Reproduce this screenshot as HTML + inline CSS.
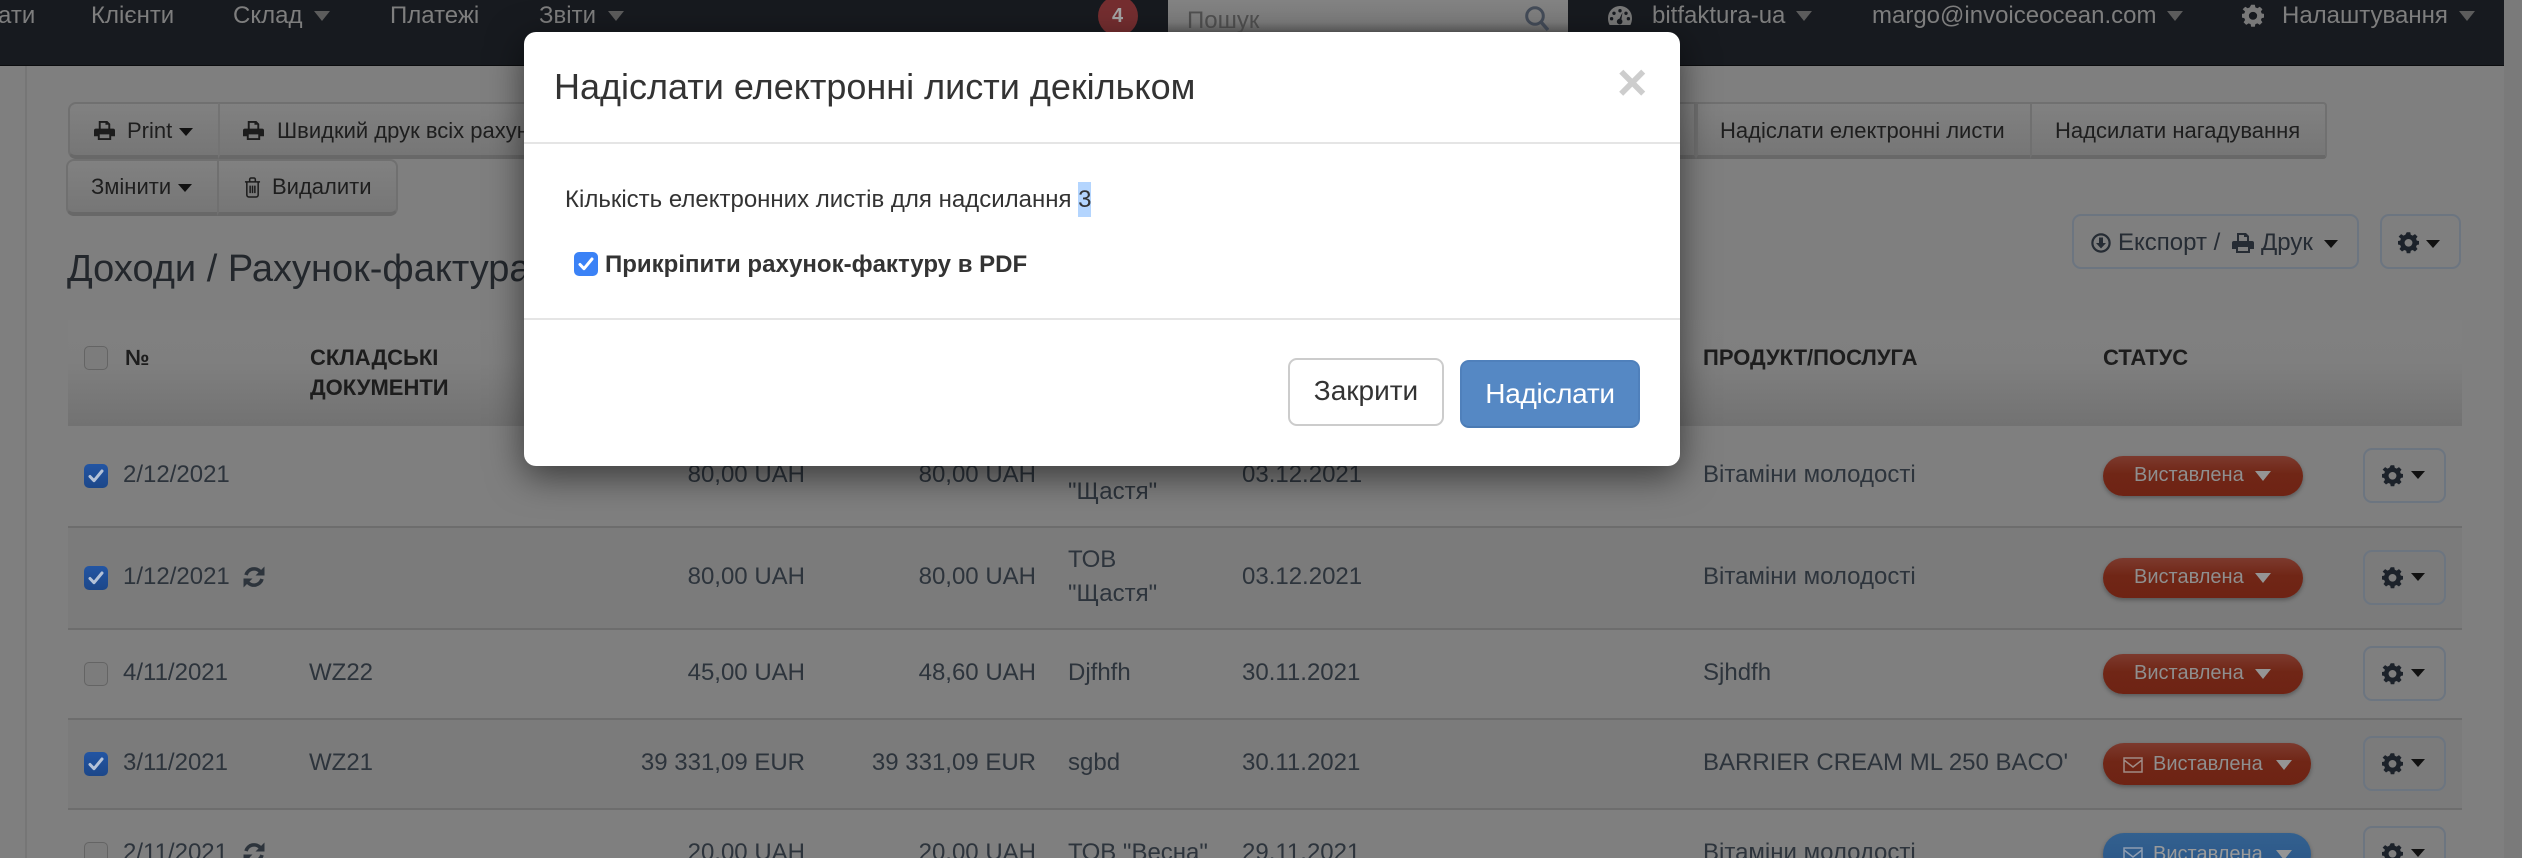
<!DOCTYPE html>
<html lang="uk"><head><meta charset="utf-8"><title>Доходи</title>
<style>
html,body{margin:0;padding:0;width:2522px;height:858px;overflow:hidden}
#p{position:absolute;left:0;top:0;width:2522px;height:858px;overflow:hidden;background:#7f7f7f;font-family:"Liberation Sans",sans-serif;font-size:24px;color:#2d343c}
.a,.t,.c,svg{position:absolute}
.t{white-space:nowrap;line-height:40px;height:40px}
.r{transform:translateX(-100%)}
.c{width:0;height:0;border-left:7px solid transparent;border-right:7px solid transparent;border-top:8px solid #111}
.nav .t{color:#7e7e7e;top:-4px}
.nav .c{border-left-width:8px;border-right-width:8px;border-top:10px solid #5c5c5c;top:11px}
.btn{background:linear-gradient(#818181,#767676);border:2px solid #707070;border-bottom:4px solid #686868;box-sizing:border-box;position:absolute}
.b{font-size:22px;color:#1e1e1e}
.h{font-weight:bold;font-size:22px;color:#1d1d1d}
.cb{position:absolute;left:84px;width:24px;height:24px;box-sizing:border-box;border-radius:5px;background:#7c7c7c;border:1.5px solid #646464}
.cb.k{background:linear-gradient(#2355a3,#1c4789);border:0}
.cb.k svg{left:4px;top:5px}
.pill{position:absolute;left:2103px;width:200px;height:40px;border-radius:20px;background:linear-gradient(#7c3a2e,#702616 45%,#6e2314);box-shadow:0 2px 4px rgba(0,0,0,.3)}
.pl{width:208px;height:42px;border-radius:21px}
.bl{background:linear-gradient(#33608f,#2a5686)}
.ps{font-size:20px;color:#8f8f8f}
.pc{border-left:8px solid transparent;border-right:8px solid transparent;border-top:10px solid #959595}
.g{position:absolute;left:2363px;width:83px;height:55px;box-sizing:border-box;border:2px solid #6c7580;border-radius:9px}
.line{position:absolute;left:68px;width:2394px;height:2px;background:#6d6d6d}
#m{position:absolute;left:524px;top:32px;width:1156px;height:434px;background:#fff;border-radius:12px;box-shadow:0 10px 36px rgba(0,0,0,.55);color:#333}
#m .t{color:#333}
</style></head><body>
<div id="p">
<svg width="0" height="0" style="position:absolute"><defs>
<symbol id="print" viewBox="0 0 22 22"><path fill="currentColor" d="M5 1h9l3 3v5h-2V5h-3V3H7v6H5zM2 9h18a2 2 0 0 1 2 2v6h-4v4H4v-4H0v-6a2 2 0 0 1 2-2zm4 6v4h10v-4z"/></symbol>
<symbol id="gear" viewBox="0 0 24 24"><path fill="currentColor" fill-rule="evenodd" d="M10 1h4l.6 3 2.2.9 2.6-1.7 2.9 2.9-1.7 2.6.9 2.2 3 .6v4l-3 .6-.9 2.2 1.7 2.6-2.9 2.9-2.6-1.7-2.2.9L14 26h-4l-.6-3-2.2-.9-2.6 1.7-2.9-2.9 1.7-2.6-.9-2.2-3-.6v-4l3-.6.9-2.2L.7 6.1l2.9-2.9 2.6 1.7 2.2-.9zM12 9a4.5 4.5 0 1 0 0 9 4.5 4.5 0 0 0 0-9z" transform="translate(0 -1.2) scale(1 .96)"/></symbol>
<symbol id="sync" viewBox="0 0 22 22"><path fill="none" stroke="currentColor" stroke-width="3.6" d="M3 9a8.3 8.3 0 0 1 14.5-3M19 13a8.3 8.3 0 0 1-14.5 3"/><path fill="currentColor" d="M21.500 .5v9h-9zM.5 21.500v-9h9z"/></symbol>
<symbol id="env" viewBox="0 0 20 16"><path fill="none" stroke="currentColor" stroke-width="1.5" d="M1 1h18v14H1zM1 3l9 7 9-7"/></symbol>
<symbol id="gauge" viewBox="0 0 24 20"><path fill="currentColor" fill-rule="evenodd" d="M12 0a12 12 0 0 1 12 12c0 3-.6 5-1.6 7H1.6C.6 17 0 15 0 12A12 12 0 0 1 12 0zM12 3a1.7 1.7 0 1 0 0 3.4A1.7 1.7 0 0 0 12 3zM6 5.6A1.7 1.7 0 1 0 6 9a1.7 1.7 0 0 0 0-3.4zM18 5.6A1.7 1.7 0 1 0 18 9a1.7 1.7 0 0 0 0-3.4zM3.600 11a1.700 1.700 0 1 0 0 3.400A1.700 1.700 0 0 0 3.600 11zM20.400 11a1.700 1.700 0 1 0 0 3.400 1.700 1.700 0 0 0 0-3.400zM14.500 6.500L11.400 12.800a2.800 2.800 0 1 0 2 .6z"/></symbol>
<symbol id="trash" viewBox="0 0 18 22"><path fill="none" stroke="currentColor" stroke-width="1.6" d="M1 5h16M3 5v14a2 2 0 0 0 2 2h8a2 2 0 0 0 2-2V5M6 5V2.500A1.500 1.500 0 0 1 7.500 1h3A1.500 1.500 0 0 1 12 2.500V5M6.500 9v8M9 9v8M11.500 9v8"/></symbol>
<symbol id="dl" viewBox="0 0 20 20"><circle cx="10" cy="10" r="8.600" fill="none" stroke="currentColor" stroke-width="2.200"/><path fill="currentColor" d="M8 4.500h4V10h3l-5 5.500L5 10h3z"/></symbol>
<symbol id="chk" viewBox="0 0 16 14"><path fill="none" stroke="currentColor" stroke-width="3" stroke-linecap="round" stroke-linejoin="round" d="M2 7.500l4 4.200 8-9.700"/></symbol>
<symbol id="mag" viewBox="0 0 24 26"><circle cx="10" cy="10" r="8.300" fill="none" stroke="currentColor" stroke-width="3"/><path stroke="currentColor" stroke-width="3.500" d="M16 16l7 8"/></symbol>
</defs></svg>

<!-- side strips -->
<div class="a" style="left:2504px;top:0;width:18px;height:858px;background:#7a7a7a"></div>
<div class="a" style="left:25px;top:65px;width:1.500px;height:793px;background:#767676"></div>

<!-- nav -->
<div class="a nav" style="left:0;top:0;width:2504px;height:66px;background:#171a1f;border-bottom:1px solid #0c0d0f;box-sizing:border-box">
<span class="t" style="left:-2px">ати</span>
<span class="t" style="left:91px">Клієнти</span>
<span class="t" style="left:233px">Склад</span><i class="c" style="left:314px"></i>
<span class="t" style="left:390px">Платежі</span>
<span class="t" style="left:539px">Звіти</span><i class="c" style="left:608px"></i>
<div class="a" style="left:1098px;top:-4px;width:40px;height:40px;border-radius:50%;background:#752e30"></div>
<span class="t" style="left:1112px;top:-4px;font-size:20px;font-weight:bold;color:#a5a5a5">4</span>
<div class="a" style="left:1168px;top:0;width:400px;height:32px;background:linear-gradient(#838383 0,#7d7d7d 70%,#6a6a6a 93%,#5e5e5e 100%)"></div>
<span class="t" style="left:1187px;top:1px;color:#505050">Пошук</span>
<svg style="left:1525px;top:6px;color:#444c59" width="24" height="26"><use href="#mag"/></svg>
<svg style="left:1608px;top:6px;color:#787878" width="24" height="20"><use href="#gauge"/></svg>
<span class="t" style="left:1652px">bitfaktura-ua</span><i class="c" style="left:1796px"></i>
<span class="t" style="left:1872px">margo@invoiceocean.com</span><i class="c" style="left:2167px"></i>
<svg style="left:2242px;top:4px;color:#787878" width="22" height="24"><use href="#gear"/></svg>
<span class="t" style="left:2282px">Налаштування</span><i class="c" style="left:2459px"></i>
</div>

<!-- toolbar row 1 -->
<div class="btn" style="left:68px;top:102px;width:152px;height:57px;border-radius:8px 0 0 8px"></div>
<div class="btn" style="left:218px;top:102px;width:1478px;height:57px;border-left:2px solid #737373"></div>
<div class="btn" style="left:1696px;top:102px;width:336px;height:57px;border-left:2px solid #707070"></div>
<div class="btn" style="left:2030px;top:102px;width:297px;height:57px;border-left:2px solid #707070;border-radius:0 4px 4px 0"></div>
<svg style="left:94px;top:120px;color:#1c1c1c" width="21" height="21"><use href="#print"/></svg>
<span class="t b" style="left:127px;top:111px">Print</span><i class="c" style="left:179px;top:128px"></i>
<svg style="left:243px;top:120px;color:#1c1c1c" width="21" height="21"><use href="#print"/></svg>
<span class="t b" style="left:277px;top:111px">Швидкий друк всіх рахунків</span>
<span class="t b" style="left:1720px;top:111px">Надіслати електронні листи</span>
<span class="t b" style="left:2055px;top:111px">Надсилати нагадування</span>
<!-- toolbar row 2 -->
<div class="btn" style="left:66px;top:159px;width:153px;height:57px;border-radius:8px 0 0 8px"></div>
<div class="btn" style="left:217px;top:159px;width:181px;height:57px;border-radius:0 8px 8px 0"></div>
<span class="t b" style="left:91px;top:167px">Змінити</span><i class="c" style="left:178px;top:184px"></i>
<svg style="left:244px;top:177px;color:#1c1c1c" width="17" height="21"><use href="#trash"/></svg>
<span class="t b" style="left:272px;top:167px">Видалити</span>

<span class="t" style="left:67px;top:249px;font-size:38px;color:#23272c">Доходи / Рахунок-фактура</span>

<!-- export -->
<div class="a" style="left:2072px;top:214px;width:287px;height:55px;box-sizing:border-box;border:2px solid #6c7580;border-radius:9px"></div>
<svg style="left:2091px;top:233px;color:#262c34" width="20" height="20"><use href="#dl"/></svg>
<span class="t" style="left:2118px;top:223px;color:#262c34">Експорт /</span>
<svg style="left:2232px;top:232px;color:#262c34" width="22" height="22"><use href="#print"/></svg>
<span class="t" style="left:2261px;top:223px;color:#262c34">Друк</span><i class="c" style="left:2324px;top:240px"></i>
<div class="a" style="left:2380px;top:214px;width:81px;height:55px;box-sizing:border-box;border:2px solid #6c7580;border-radius:9px"></div>
<svg style="left:2398px;top:232px;color:#1c222a" width="21" height="22"><use href="#gear"/></svg><i class="c" style="left:2426px;top:240px"></i>

<!-- table head -->
<div class="a" style="left:68px;top:320px;width:2394px;height:106px;background:linear-gradient(#808080,#7f7f7f 40%,#727272)"></div>
<div class="cb" style="top:346px"></div>
<span class="t h" style="left:125px;top:338px">№</span>
<span class="t h" style="left:310px;top:338px">СКЛАДСЬКІ</span>
<span class="t h" style="left:310px;top:368px">ДОКУМЕНТИ</span>
<span class="t h" style="left:1703px;top:338px">ПРОДУКТ/ПОСЛУГА</span>
<span class="t h" style="left:2103px;top:338px">СТАТУС</span>

<!-- row backgrounds -->
<div class="a" style="left:68px;top:528px;width:2394px;height:100px;background:#7b7b7b"></div>
<div class="a" style="left:68px;top:720px;width:2394px;height:88px;background:#7b7b7b"></div>
<div class="line" style="top:526px"></div><div class="line" style="top:628px"></div><div class="line" style="top:718px"></div><div class="line" style="top:808px"></div>

<!-- row 1 -->
<div class="cb k" style="top:464px"><svg style="color:#b4c2d8" width="16" height="14"><use href="#chk"/></svg></div>
<span class="t" style="left:123px;top:455px">2/12/2021</span>
<span class="t r" style="left:805px;top:455px">80,00 UAH</span>
<span class="t r" style="left:1036px;top:455px">80,00 UAH</span>
<span class="t" style="left:1068px;top:472px">"Щастя"</span>
<span class="t" style="left:1242px;top:455px">03.12.2021</span>
<span class="t" style="left:1703px;top:455px">Вітаміни молодості</span>
<div class="pill" style="top:456px"></div>
<span class="t ps" style="left:2134px;top:455px">Виставлена</span><i class="c pc" style="left:2255px;top:471px"></i>
<div class="g" style="top:448px"></div>
<svg style="left:2382px;top:465px;color:#1c222a" width="21" height="22"><use href="#gear"/></svg><i class="c" style="left:2411px;top:471px"></i>

<!-- row 2 -->
<div class="cb k" style="top:566px"><svg style="color:#b4c2d8" width="16" height="14"><use href="#chk"/></svg></div>
<span class="t" style="left:123px;top:557px">1/12/2021</span>
<svg style="left:243px;top:566px;color:#2d343c" width="22" height="22"><use href="#sync"/></svg>
<span class="t r" style="left:805px;top:557px">80,00 UAH</span>
<span class="t r" style="left:1036px;top:557px">80,00 UAH</span>
<span class="t" style="left:1068px;top:540px">ТОВ</span>
<span class="t" style="left:1068px;top:574px">"Щастя"</span>
<span class="t" style="left:1242px;top:557px">03.12.2021</span>
<span class="t" style="left:1703px;top:557px">Вітаміни молодості</span>
<div class="pill" style="top:558px"></div>
<span class="t ps" style="left:2134px;top:557px">Виставлена</span><i class="c pc" style="left:2255px;top:573px"></i>
<div class="g" style="top:550px"></div>
<svg style="left:2382px;top:567px;color:#1c222a" width="21" height="22"><use href="#gear"/></svg><i class="c" style="left:2411px;top:573px"></i>

<!-- row 3 -->
<div class="cb" style="top:662px"></div>
<span class="t" style="left:123px;top:653px">4/11/2021</span>
<span class="t" style="left:309px;top:653px">WZ22</span>
<span class="t r" style="left:805px;top:653px">45,00 UAH</span>
<span class="t r" style="left:1036px;top:653px">48,60 UAH</span>
<span class="t" style="left:1068px;top:653px">Djfhfh</span>
<span class="t" style="left:1242px;top:653px">30.11.2021</span>
<span class="t" style="left:1703px;top:653px">Sjhdfh</span>
<div class="pill" style="top:654px"></div>
<span class="t ps" style="left:2134px;top:653px">Виставлена</span><i class="c pc" style="left:2255px;top:669px"></i>
<div class="g" style="top:646px"></div>
<svg style="left:2382px;top:663px;color:#1c222a" width="21" height="22"><use href="#gear"/></svg><i class="c" style="left:2411px;top:669px"></i>

<!-- row 4 -->
<div class="cb k" style="top:752px"><svg style="color:#b4c2d8" width="16" height="14"><use href="#chk"/></svg></div>
<span class="t" style="left:123px;top:743px">3/11/2021</span>
<span class="t" style="left:309px;top:743px">WZ21</span>
<span class="t r" style="left:805px;top:743px">39 331,09 EUR</span>
<span class="t r" style="left:1036px;top:743px">39 331,09 EUR</span>
<span class="t" style="left:1068px;top:743px">sgbd</span>
<span class="t" style="left:1242px;top:743px">30.11.2021</span>
<span class="t" style="left:1703px;top:743px;width:365px;overflow:hidden">BARRIER CREAM ML 250 BACO'</span>
<div class="pill pl" style="top:743px"></div>
<svg style="left:2123px;top:757px;color:#a08b85" width="20" height="16"><use href="#env"/></svg>
<span class="t ps" style="left:2153px;top:744px">Виставлена</span><i class="c pc" style="left:2276px;top:760px"></i>
<div class="g" style="top:736px"></div>
<svg style="left:2382px;top:753px;color:#1c222a" width="21" height="22"><use href="#gear"/></svg><i class="c" style="left:2411px;top:759px"></i>

<!-- row 5 -->
<div class="cb" style="top:842px"></div>
<span class="t" style="left:123px;top:833px">2/11/2021</span>
<svg style="left:243px;top:842px;color:#2d343c" width="22" height="22"><use href="#sync"/></svg>
<span class="t r" style="left:805px;top:833px">20,00 UAH</span>
<span class="t r" style="left:1036px;top:833px">20,00 UAH</span>
<span class="t" style="left:1068px;top:833px">ТОВ "Весна"</span>
<span class="t" style="left:1242px;top:833px">29.11.2021</span>
<span class="t" style="left:1703px;top:833px">Вітаміни молодості</span>
<div class="pill pl bl" style="top:833px"></div>
<svg style="left:2123px;top:847px;color:#8d9cb0" width="20" height="16"><use href="#env"/></svg>
<span class="t ps" style="left:2153px;top:834px;color:#9a9a9a">Виставлена</span><i class="c pc" style="left:2276px;top:850px"></i>
<div class="g" style="top:826px"></div>
<svg style="left:2382px;top:843px;color:#1c222a" width="21" height="22"><use href="#gear"/></svg><i class="c" style="left:2411px;top:849px"></i>

<!-- modal -->
<div id="m">
<span class="t" style="left:30px;top:35px;font-size:36px;line-height:40px">Надіслати електронні листи декільком</span>
<span class="t" style="left:1093px;top:26px;font-size:52px;font-weight:bold;line-height:50px;height:50px;color:#cdcdcd">×</span>
<div class="a" style="left:0;top:110px;width:1156px;height:2px;background:#e5e5e5"></div>
<span class="t" style="left:41px;top:148px">Кількість електронних листів для надсилання <span style="background:#b4d5fe;padding:4px 0">3</span></span>
<div class="a" style="left:50px;top:220px;width:24px;height:24px;border-radius:5px;background:#3b82f6"><svg style="left:4px;top:5px;color:#fff" width="16" height="14"><use href="#chk"/></svg></div>
<span class="t" style="left:81px;top:213px;font-weight:bold">Прикріпити рахунок-фактуру в PDF</span>
<div class="a" style="left:0;top:286px;width:1156px;height:2px;background:#e5e5e5"></div>
<div class="a" style="left:764px;top:326px;width:156px;height:68px;box-sizing:border-box;border:2px solid #ccc;border-radius:9px;background:#fff;text-align:center;line-height:62px;font-size:28px;color:#333">Закрити</div>
<div class="a" style="left:936px;top:328px;width:180px;height:68px;box-sizing:border-box;border:2px solid #4f80bb;border-bottom-color:#4a7ab3;border-radius:9px;background:#5588c4;text-align:center;line-height:64px;font-size:28px;letter-spacing:-.3px;color:#fff">Надіслати</div>
</div>
</div>
</body></html>
